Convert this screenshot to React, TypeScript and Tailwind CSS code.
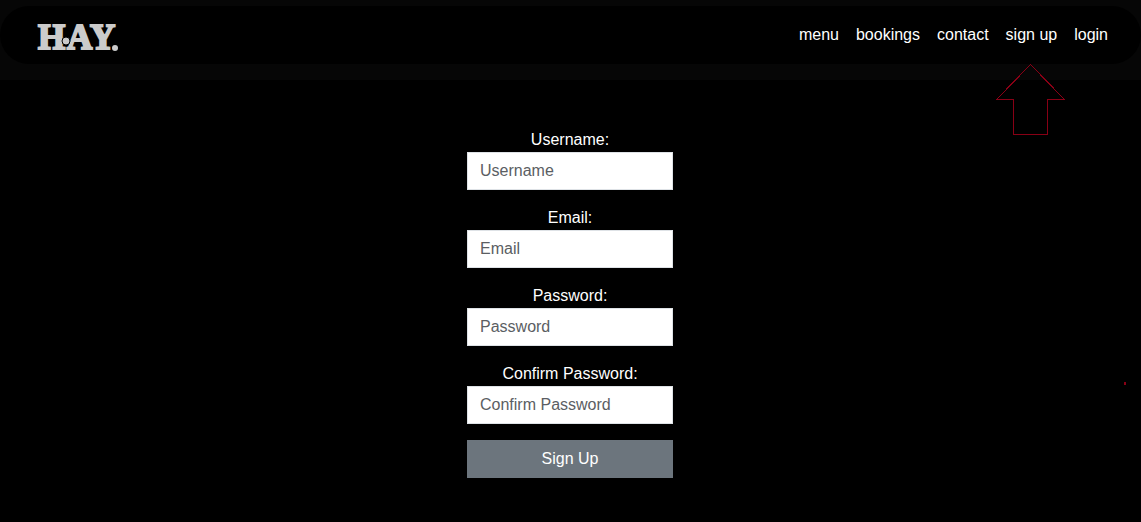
const links = ["menu", "bookings", "contact", "sign up", "login"];

const fields = [
  { id: "username", label: "Username", type: "text" },
  { id: "email", label: "Email", type: "email" },
  { id: "password", label: "Password", type: "password" },
  { id: "confirm-password", label: "Confirm Password", type: "password" },
];

function Logo() {
  return (
    <svg
      className="overflow-visible"
      width="82"
      height="36"
      viewBox="0 0 82 36"
      role="img"
      aria-label="H.AY."
    >
      <g
        fill="#cbcbcb"
        stroke="#cbcbcb"
        strokeWidth="2"
        className="font-['Liberation_Serif',serif] text-[35px] font-bold"
      >
        <text x="2" y="32">H</text>
        <text x="31" y="32">A</text>
        <text x="54" y="32">Y</text>
      </g>
      <circle cx="30" cy="24" r="4" fill="#cbcbcb" stroke="#000" />
      <circle cx="79" cy="31" r="3" fill="#cbcbcb" />
    </svg>
  );
}

function UpArrow() {
  return (
    <svg
      className="pointer-events-none absolute top-[41px] left-1/2 -translate-x-1/2"
      width="70"
      height="72"
      viewBox="0 0 70 72"
      fill="none"
      stroke="#880015"
      shapeRendering="crispEdges"
      aria-hidden="true"
    >
      <path d="M34.5 .5 L68.5 35.5 H51.5 V70.5 H17.5 V35.5 H.5 Z" />
    </svg>
  );
}

export default function App() {
  return (
    <div className="relative min-h-screen bg-black font-['Liberation_Sans',sans-serif] text-base text-white">
      <header className="bg-[#060606] pt-1.5 pb-4">
        <nav className="flex h-[58px] items-center justify-between rounded-full bg-black pr-[33px] pl-9">
          <a href="#home">
            <Logo />
          </a>
          <ul className="flex gap-[17px]">
            {links.map((link) => (
              <li key={link} className="relative">
                <a href={"#" + link.replace(" ", "-")}>{link}</a>
                {link === "sign up" && <UpArrow />}
              </li>
            ))}
          </ul>
        </nav>
      </header>
      <main className="flex justify-center pt-12 pr-[17px] pb-10 pl-4">
        <form className="flex w-[206px] flex-col gap-4">
          {fields.map(({ id, label, type }) => (
            <div key={id} className="flex flex-col">
              <label htmlFor={id} className="text-center leading-6">
                {label}:
              </label>
              <input
                id={id}
                type={type}
                placeholder={label}
                className="h-[38px] w-full border border-[#dee2e6] bg-white px-3 text-[#212529] placeholder:text-[#5b5e63]"
              />
            </div>
          ))}
          <button type="button" className="h-[38px] bg-[#6c757d]">
            Sign Up
          </button>
        </form>
      </main>
      <span className="absolute top-[382px] right-[15px] h-[3px] w-0.5 bg-[#880015]" />
    </div>
  );
}
